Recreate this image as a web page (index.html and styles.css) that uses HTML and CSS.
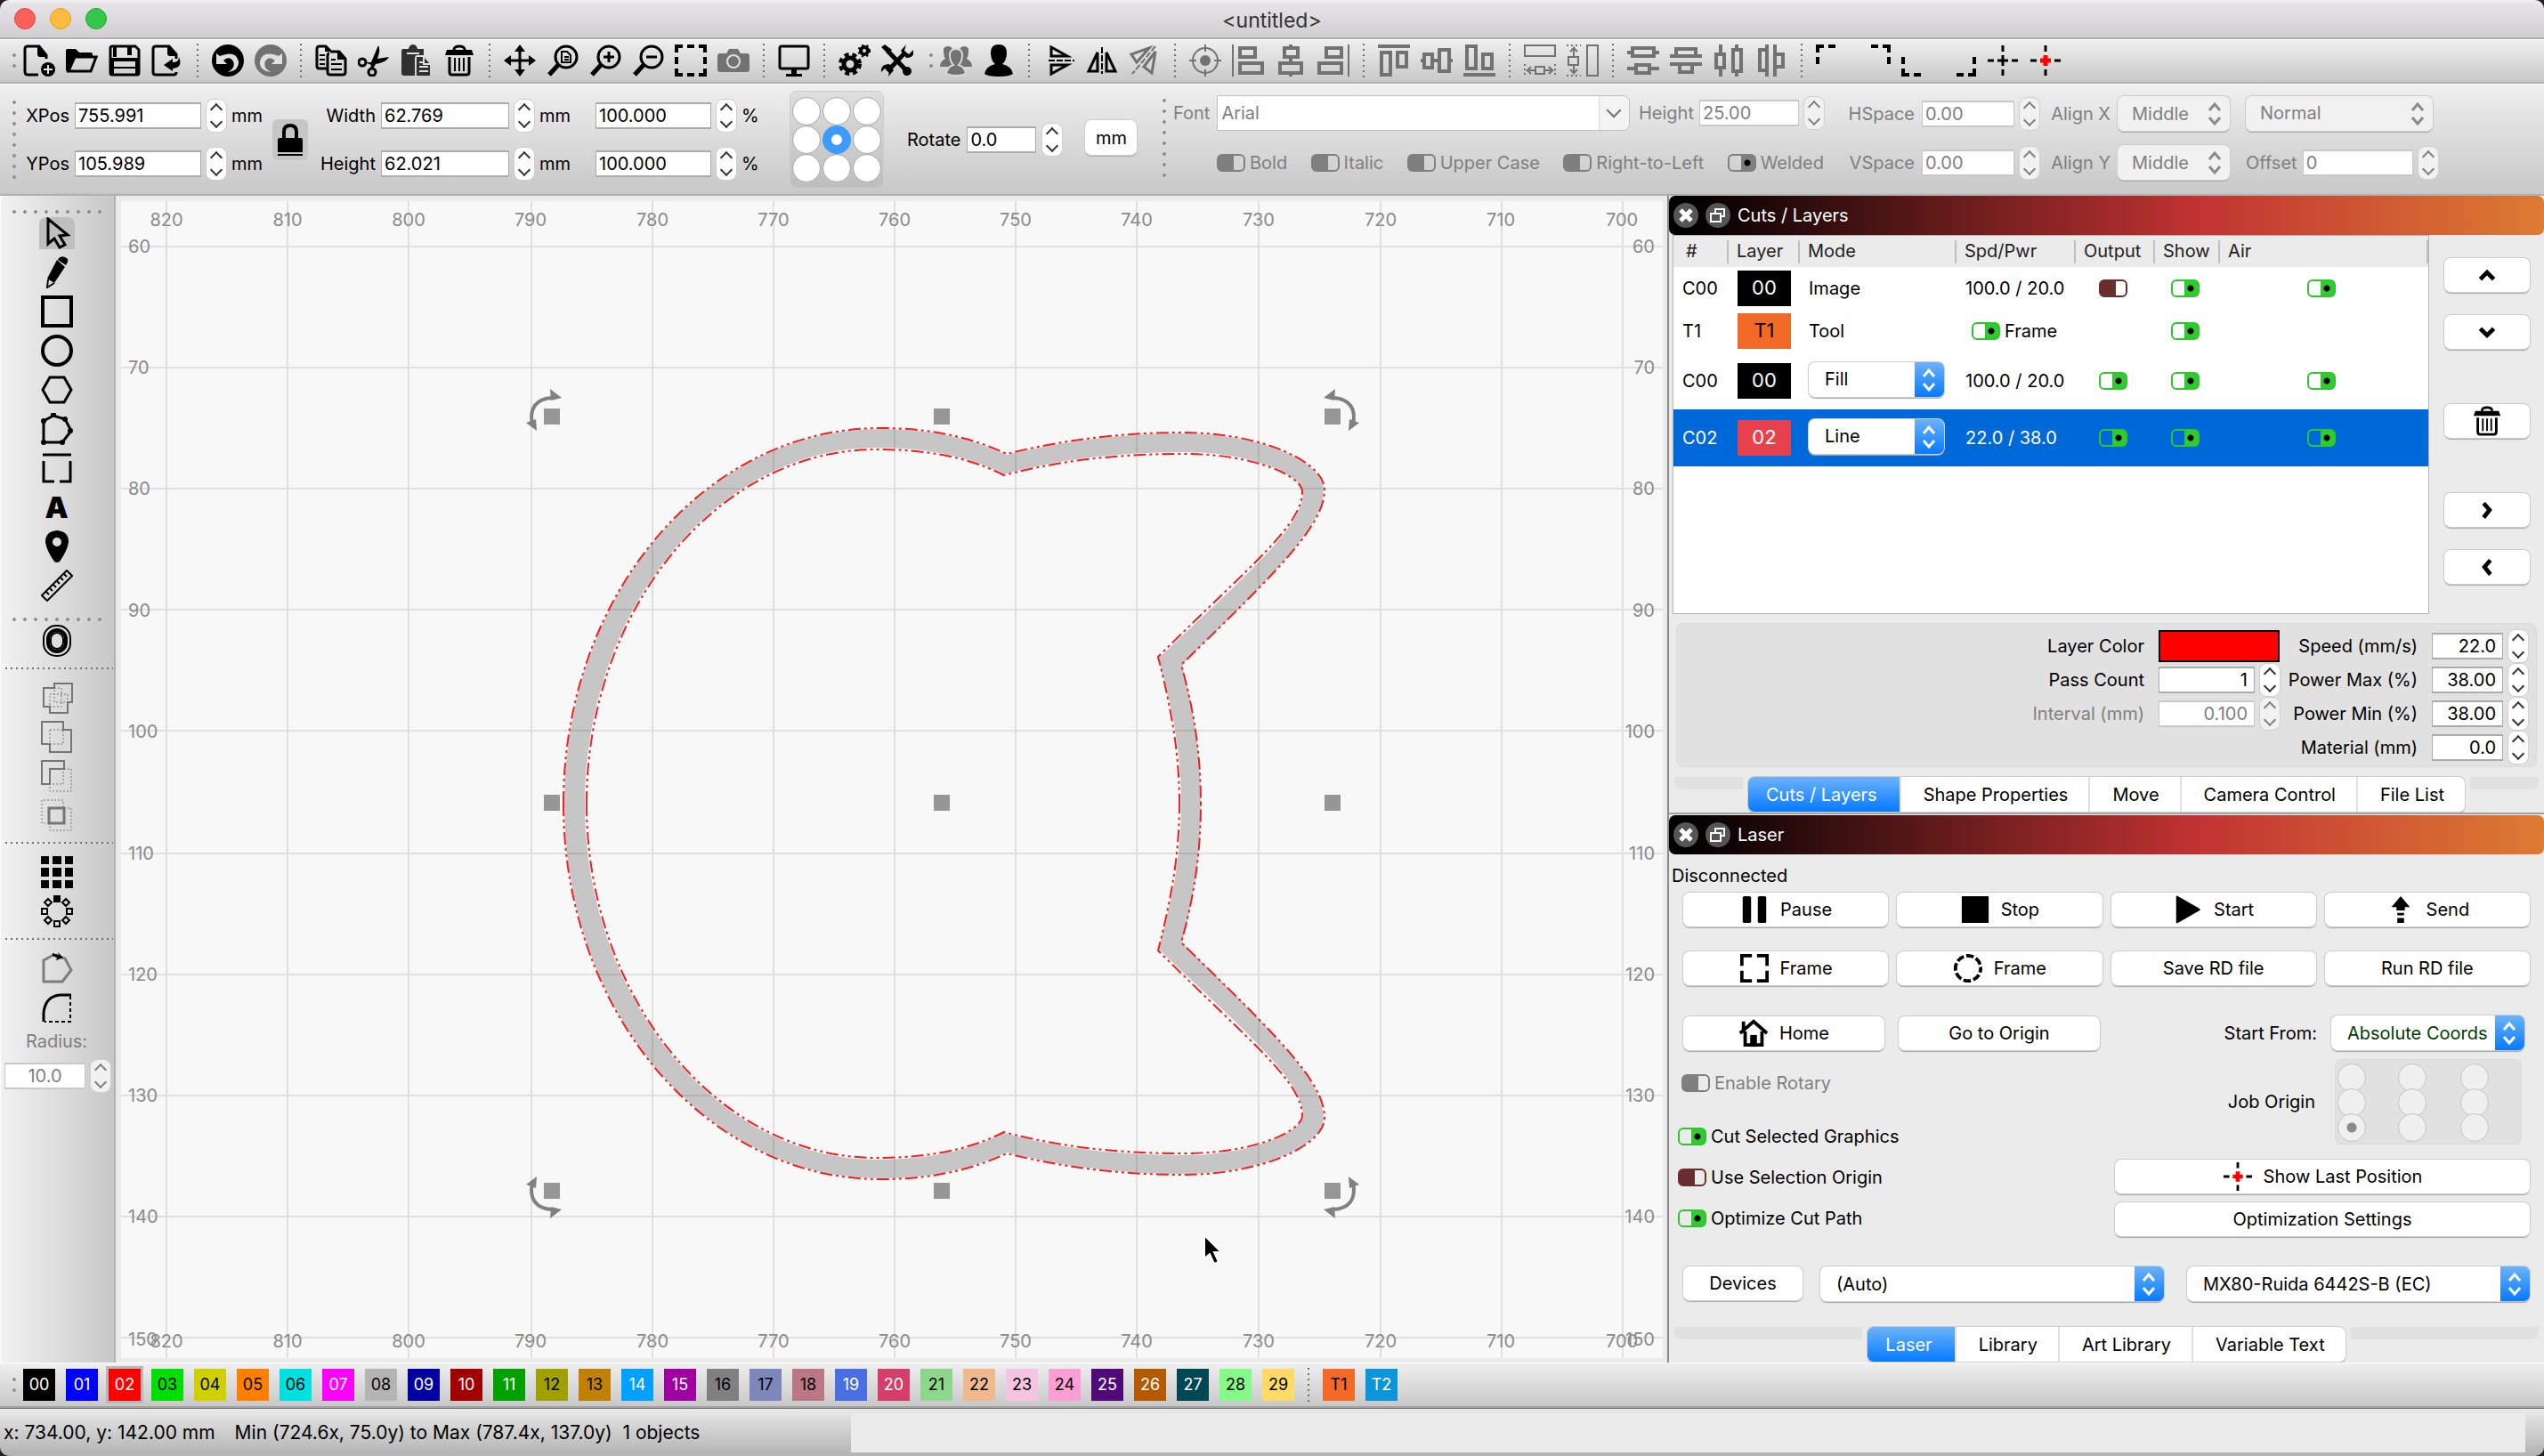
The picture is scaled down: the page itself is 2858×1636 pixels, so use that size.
FILE: index.html
```
<!DOCTYPE html>
<html lang="en">
<head>
    <meta charset="UTF-8">
    <meta name="viewport" content="width=device-width, initial-scale=1.0">
    <title>&lt;untitled&gt;</title>
    <link rel="stylesheet" href="styles.css">
</head>
<body>
    <!-- Icon sprite -->
    <svg class="sprite" aria-hidden="true">
        <symbol id="new" viewBox="0 0 36 36"><path d="M26 16V12L18 2H5Q2 2 2 5V30Q2 34 5 34H17"/><path class="f" d="M16 1L27 14H19Q16 14 16 11z"/><circle class="f" cx="28" cy="28" r="8"/><path class="w" d="M28 23v10M23 28h10"/></symbol>
        <symbol id="open" viewBox="0 0 36 36"><path class="f" d="M0 7Q0 5 2 5H11L15 9H28Q30 9 30 11V13H10L3 31Q0 31 0 28z"/><path d="M10 14H34L28 30H3z"/></symbol>
        <symbol id="save" viewBox="0 0 36 36"><path d="M2 4Q2 2 4 2H30L34 6V32Q34 34 32 34H4Q2 34 2 32z"/><path class="f" d="M1 15H35V19H1zM1 15H6V34H1zM30 15H35V34H30zM5 2H9V14H5zM21 3H26V12H21z"/><path d="M5 26H31" class="thin"/></symbol>
        <symbol id="export" viewBox="0 0 36 36"><path d="M28 16V11L20 2H5Q2 2 2 5V31Q2 34 5 34H25Q28 34 28 31"/><path class="f" d="M18 1L29 13H21Q18 13 18 10zM14 23L24 16V20Q31 20 31 14Q36 26 24 27V30z"/></symbol>
        <symbol id="undo" viewBox="0 0 36 36"><circle class="f" cx="18" cy="18" r="18"/><path class="wf" d="M5 10V22H17L13 18Q20 12 24 19Q27 26 18 31Q31 29 30 19Q27 6 9 13z"/></symbol>
        <symbol id="redo" viewBox="0 0 36 36"><circle class="f" cx="18" cy="18" r="18"/><path class="wf" d="M31 10V22H19L23 18Q16 12 12 19Q9 26 18 31Q5 29 6 19Q9 6 27 13z"/></symbol>
        <symbol id="copy" viewBox="0 0 36 36"><path d="M13 27H5Q2 27 2 24V5Q2 2 5 2H12L17 7M16 10Q14 10 14 13V31Q14 34 17 34H31Q34 34 34 31V16L27 8H17"/><path class="f" d="M25 7L35 17H25zM11 1L18 8H11z"/><path class="thin" d="M5 12H11M5 17H11M5 22H11M18 17H23M18 22H30M18 28H30"/></symbol>
        <symbol id="cut" viewBox="0 0 36 36"><circle cx="5" cy="20" r="4"/><circle cx="16" cy="31" r="4"/><path class="f" d="M8 20L15 20L23 1Q26 5 22 16L35 14Q32 20 20 22L17 27L14 27L15 23z"/></symbol>
        <symbol id="paste" viewBox="0 0 36 36"><path class="f" d="M2 5H9Q10 0 14 0Q18 0 19 5H26V12H19Q16 12 16 16V35H4Q1 35 1 32V7z"/><path class="w" d="M7 10H21"/><path class="f" d="M18 14H26L33 22V35H18z"/><path class="w" d="M26 14V22H33M21 20H25M21 25H31M21 30H31"/></symbol>
        <symbol id="trash" viewBox="0 0 36 36"><path d="M12 6Q12 2 18 2Q24 2 24 6M7 14V31Q7 34 10 34H26Q29 34 29 31V14"/><path class="f" d="M4 6H32L34 12H2z"/><path class="thin" d="M13 15V30M18 15V30M23 15V30"/></symbol>
        <symbol id="pan" viewBox="0 0 36 36"><path d="M18 5V31M5 18H31"/><path class="f" d="M18 0L24 8H12zM18 36L24 28H12zM0 18L8 12V24zM36 18L28 12V24z"/></symbol>
        <symbol id="zoompage" viewBox="0 0 36 36"><circle cx="22" cy="14" r="12"/><path class="thick" d="M13 23L3 34"/><path class="thin" d="M17 8H23L27 12V20H17zM20 14H25M20 17H25"/></symbol>
        <symbol id="zoomin" viewBox="0 0 36 36"><circle cx="22" cy="14" r="12"/><path class="thick" d="M13 23L3 34"/><path d="M22 8V20M16 14H28"/></symbol>
        <symbol id="zoomout" viewBox="0 0 36 36"><circle cx="22" cy="14" r="12"/><path class="thick" d="M13 23L3 34"/><path d="M16 14H28"/></symbol>
        <symbol id="marquee" viewBox="0 0 36 36"><path class="mid" d="M2 9V2H9M14 2H22M27 2H34V9M34 14V22M34 27V34H27M22 34H14M9 34H2V27M2 22V14"/></symbol>
        <symbol id="camera" viewBox="0 0 36 36"><path class="f" d="M10 10L13 5H23L26 10H33Q36 10 36 13V28Q36 31 33 31H3Q0 31 0 28V13Q0 10 3 10z"/><circle class="w" cx="18" cy="19" r="7"/></symbol>
        <symbol id="monitor" viewBox="0 0 36 36"><rect x="2" y="2" width="32" height="25" rx="2"/><path class="f" d="M15 28H21V33H27V36H9V33H15z"/></symbol>
        <symbol id="gears" viewBox="0 0 36 36"><circle class="thick" cx="13" cy="22" r="7"/><circle class="mid" cx="13" cy="22" r="11" stroke-dasharray="5 4"/><circle class="mid" cx="29" cy="7" r="4"/><circle cx="29" cy="7" r="6" stroke-dasharray="2 3"/></symbol>
        <symbol id="tools" viewBox="0 0 36 36"><path class="thick" d="M7 30L27 9M7 7L29 30"/><path class="f" d="M22 7L28 0L26 7L31 11L36 6Q38 15 28 15zM14 29L8 36L9 30L4 27L0 31Q-1 22 9 22zM0 3L4 0L12 6L8 11z"/><circle class="f" cx="29" cy="30" r="5"/></symbol>
        <symbol id="group" viewBox="0 0 36 36"><path class="f" d="M4 8Q3 2 9 2Q15 2 14 8Q14 13 11 16L15 25H0Q0 19 6 16Q4 13 4 8zM22 8Q22 2 27 2Q33 2 32 8Q32 13 30 16Q36 19 36 25H21L25 16Q22 13 22 8z"/><path class="f ring" d="M11 12Q11 5 18 5Q25 5 25 12Q25 19 21 23Q28 25 29 33Q24 35 18 35Q12 35 7 33Q8 25 15 23Q11 19 11 12z"/></symbol>
        <symbol id="person" viewBox="0 0 36 36"><path class="f" d="M9 9Q9 0 18 0Q27 0 27 9Q27 18 22 22Q32 24 34 33Q30 36 18 36Q6 36 2 33Q4 24 14 22Q9 18 9 9z"/></symbol>
        <symbol id="flipv" viewBox="0 0 36 36"><path d="M9 3V13H27zM9 33V23H27z"/><path class="thin" d="M6 18H35" stroke-dasharray="7 2"/></symbol>
        <symbol id="fliph" viewBox="0 0 36 36"><path d="M3 30H13V9zM33 30H23V9z"/><path class="thin" d="M18 3V33" stroke-dasharray="7 2"/></symbol>
        <symbol id="mirror" viewBox="0 0 36 36"><path d="M23 4L3 11L9 20zM30 8L26 32L17 25z"/><path class="thin" d="M30 2L4 33" stroke-dasharray="7 2"/></symbol>
        <symbol id="target" viewBox="0 0 36 36"><circle class="thin" cx="18" cy="18" r="14"/><circle class="f" cx="18" cy="18" r="6"/><path class="thin" d="M18 0V8M18 28V36M0 18H8M28 18H36"/></symbol>
        <symbol id="alignl" viewBox="0 0 36 36"><path class="thin" d="M1 0V36"/><rect class="mid" x="9" y="4" width="17" height="10"/><rect class="mid" x="9" y="21" width="25" height="11"/></symbol>
        <symbol id="alignc" viewBox="0 0 36 36"><path class="mid" d="M18 0V4M18 14V20M18 32V36"/><rect class="mid" x="11" y="4" width="15" height="10"/><rect class="mid" x="6" y="21" width="24" height="11"/></symbol>
        <symbol id="alignr" viewBox="0 0 36 36"><path class="thin" d="M35 0V36"/><rect class="mid" x="10" y="4" width="17" height="10"/><rect class="mid" x="2" y="21" width="25" height="11"/></symbol>
        <symbol id="alignt" viewBox="0 0 36 36"><path class="mid" d="M0 2H36"/><rect class="mid" x="4" y="9" width="10" height="25"/><rect class="mid" x="22" y="9" width="10" height="16"/></symbol>
        <symbol id="alignm" viewBox="0 0 36 36"><path class="mid" d="M0 18H4M14 18H20M32 18H36"/><rect class="mid" x="4" y="11" width="9" height="15"/><rect class="mid" x="21" y="6" width="11" height="24"/></symbol>
        <symbol id="alignb" viewBox="0 0 36 36"><path class="mid" d="M0 34H36"/><rect class="mid" x="4" y="2" width="10" height="25"/><rect class="mid" x="22" y="11" width="10" height="16"/></symbol>
        <symbol id="samew" viewBox="0 0 36 36"><rect class="thin" x="1" y="1" width="34" height="12"/><path class="thin" d="M1 22V36M35 22V36" stroke-dasharray="2 3"/><rect class="thin" x="13" y="25" width="10" height="8"/><path class="thin" d="M12 29H4L8 25M4 29L8 33M24 29H32L28 25M32 29L28 33"/></symbol>
        <symbol id="sameh" viewBox="0 0 36 36"><rect class="thin" x="23" y="1" width="12" height="34"/><path class="thin" d="M0 1H16M0 35H16" stroke-dasharray="2 3"/><rect class="thin" x="2" y="14" width="11" height="9"/><path class="thin" d="M8 13V4L4 8M8 4L12 8M8 24V32L4 28M8 32L12 28"/></symbol>
        <symbol id="distv" viewBox="0 0 36 36"><rect class="mid" x="6" y="4" width="24" height="9"/><rect class="mid" x="10" y="23" width="15" height="9"/><path class="mid" d="M0 9H5M31 9H36M0 27H9M26 27H36"/></symbol>
        <symbol id="distvc" viewBox="0 0 36 36"><path class="mid" d="M0 13H36M0 22H36M7 13V5H29V13M11 22V31H25V22"/></symbol>
        <symbol id="disth" viewBox="0 0 36 36"><rect class="mid" x="4" y="11" width="9" height="15"/><rect class="mid" x="23" y="6" width="9" height="24"/><path class="mid" d="M9 0V10M9 27V36M27 0V5M27 31V36"/></symbol>
        <symbol id="disthc" viewBox="0 0 36 36"><path class="mid" d="M13 0V36M22 0V36M13 6H5V29H13M22 11H31V25H22"/></symbol>
        <symbol id="ctl" viewBox="0 0 36 36"><path class="mid" d="M2 9V2H9M14 2H22M2 14V22"/></symbol>
        <symbol id="ctr" viewBox="0 0 36 36"><path class="mid" d="M34 9V2H27M22 2H14M34 14V22"/></symbol>
        <symbol id="cbl" viewBox="0 0 36 36"><path class="mid" d="M2 27V34H9M14 34H22M2 22V14"/></symbol>
        <symbol id="cbr" viewBox="0 0 36 36"><path class="mid" d="M34 27V34H27M22 34H14M34 22V14"/></symbol>
        <symbol id="cross" viewBox="0 0 36 36"><path d="M18 1V8M18 12V24M18 28V35M1 18H8M12 18H24M28 18H35"/></symbol>
        <symbol id="crossred" viewBox="0 0 36 36"><path d="M18 1V8M18 28V35M1 18H8M28 18H35"/><path class="r" d="M18 12V24M12 18H24"/></symbol>
        <symbol id="lock" viewBox="0 0 36 36"><path class="mid" d="M11 16V9Q11 2 18 2Q25 2 25 9V16"/><path class="f" d="M4 18Q4 16 6 16H30Q32 16 32 18V32H4zM4 34H32V36H4z"/></symbol>
        <symbol id="pointer" viewBox="0 0 36 36"><path d="M8 2V30L15 24L21 34L27 31L21 21L30 20z"/></symbol>
        <symbol id="pencil" viewBox="0 0 36 36"><path class="f" d="M18 4L27 12L15 30L7 25zM20 2Q25 -2 30 3Q31 6 28 10L19 4z"/><path class="thin" d="M8 26L7 35L15 30"/></symbol>
        <symbol id="rect" viewBox="0 0 36 36"><rect class="mid" x="2" y="2" width="32" height="32"/></symbol>
        <symbol id="ellipse" viewBox="0 0 36 36"><circle class="mid" cx="18" cy="18" r="16"/></symbol>
        <symbol id="hexagon" viewBox="0 0 36 36"><path d="M10 4H26L34 18L26 32H10L2 18z"/></symbol>
        <symbol id="polygon" viewBox="0 0 36 36"><path d="M3 9L14 3L27 7L34 20L24 33H3z"/><g class="f"><circle cx="3" cy="9" r="3"/><circle cx="14" cy="2" r="3"/><circle cx="27" cy="7" r="3"/><circle cx="33" cy="20" r="3"/><circle cx="24" cy="33" r="3"/><circle cx="3" cy="33" r="3"/></g></symbol>
        <symbol id="trim" viewBox="0 0 36 36"><path d="M2 3H34M3 10V33H15M21 33H33V10"/></symbol>
        <symbol id="pin" viewBox="0 0 36 36"><path class="f" fill-rule="evenodd" d="M18 0Q31 1 31 13Q30 22 21 35Q18 37 15 35Q6 22 5 13Q5 1 18 0zM18 8A5 5 0 1 0 18 18A5 5 0 1 0 18 8z"/></symbol>
        <symbol id="ruler" viewBox="0 0 36 36"><path class="thin" d="M1 29L29 1L35 7L7 35zM6 25L9 28M10 21L13 24M14 17L17 20M18 13L21 16M22 9L25 12M26 5L29 8"/></symbol>
        <symbol id="offset" viewBox="0 0 36 36"><rect class="thin" x="3" y="1" width="30" height="34" rx="14"/><rect class="mid" x="8" y="6" width="20" height="24" rx="10"/><rect class="thin" x="11" y="9" width="14" height="18" rx="7"/></symbol>
        <symbol id="weld" viewBox="0 0 36 36"><path class="thin" d="M3 7H15V2H35V23H30V35H10V28H3z"/><path class="dot" d="M15 7H23V28H10V14H30V23H15z"/></symbol>
        <symbol id="union" viewBox="0 0 36 36"><path class="thin" d="M1 1H25V10H34V35H10V26H1z"/><path class="dot" d="M10 10H25V26H10z"/></symbol>
        <symbol id="subtract" viewBox="0 0 36 36"><path class="thin" d="M1 1H26V10H10V27H1z"/><path class="dot" d="M26 10H34V35H10V27H25V11"/></symbol>
        <symbol id="intersect" viewBox="0 0 36 36"><rect x="9" y="10" width="17" height="17"/><path class="dot" d="M9 27H1V1H25V10H34V35H10V27"/></symbol>
        <symbol id="gridarray" viewBox="0 0 36 36"><path class="f" d="M0 0h9v9H0zM13 0h10v9H13zM27 0h9v9h-9zM0 13h9v10H0zM13 13h10v10H13zM27 13h9v10h-9zM0 27h9v9H0zM13 27h10v9H13zM27 27h9v9h-9z"/></symbol>
        <symbol id="circarray" viewBox="0 0 36 36"><path class="f" d="M14 0h8v8h-8z"/><path class="thin" d="M1 15h6v6H1zM29 15h6v6h-6zM15 29h6v6h-6zM8 4l4 4-4 4-4-4zM28 4l4 4-4 4-4-4zM8 24l4 4-4 4-4-4zM28 24l4 4-4 4-4-4z"/></symbol>
        <symbol id="startpt" viewBox="0 0 36 36"><g class="g"><path d="M3 9L14 3L27 7L34 20L24 33H3z"/></g><path class="f" d="M13 1L20 3L19 0L25 6L17 9L18 6L13 4z"/></symbol>
        <symbol id="fillet" viewBox="0 0 36 36"><path d="M3 34V24Q5 5 22 4H34"/><path class="thin" d="M33 5V34H4" stroke-dasharray="4 3"/></symbol>
        <symbol id="pause" viewBox="0 0 36 36"><rect class="f" x="4" y="2" width="10" height="32" rx="2"/><rect class="f" x="22" y="2" width="10" height="32" rx="2"/></symbol>
        <symbol id="stop" viewBox="0 0 36 36"><rect class="f" x="2" y="2" width="32" height="32" rx="1"/></symbol>
        <symbol id="play" viewBox="0 0 36 36"><path class="f" d="M4 3Q4 1 6 2L32 17Q33 18 32 19L6 34Q4 35 4 33z"/></symbol>
        <symbol id="send" viewBox="0 0 36 36"><path class="f" d="M18 2L29 15H23V19H13V15H7zM14 22H22V25H14zM14 28H22V34H14z"/></symbol>
        <symbol id="frame" viewBox="0 0 36 36"><path class="mid" d="M3 15V3H15M21 3H33V15M33 21V33H21M15 33H3V21"/></symbol>
        <symbol id="framec" viewBox="0 0 36 36"><circle class="mid" cx="18" cy="18" r="15" stroke-dasharray="9 3" stroke-dashoffset="4"/></symbol>
        <symbol id="home" viewBox="0 0 36 36"><path class="mid" d="M2 18L18 4L34 18M6 14V4M8 16V32H28V16"/><path class="f" d="M14 20H22V34H14z"/></symbol>
        <symbol id="up" viewBox="0 0 36 36"><path class="thick" d="M10 23L18 15L26 23"/></symbol>
        <symbol id="down" viewBox="0 0 36 36"><path class="thick" d="M10 14L18 22L26 14"/></symbol>
        <symbol id="right" viewBox="0 0 36 36"><path class="thick" d="M14 10L21 18L14 27"/></symbol>
        <symbol id="left" viewBox="0 0 36 36"><path class="thick" d="M22 10L15 18L22 27"/></symbol>
        <symbol id="updown" viewBox="0 0 20 28"><path d="M4 10L10 3L16 10M4 18L10 25L16 18"/></symbol>
        <symbol id="close" viewBox="0 0 28 28"><path class="thick" d="M8 8L20 20M20 8L8 20"/></symbol>
        <symbol id="float" viewBox="0 0 28 28"><path class="thin" d="M6 12H17V21H6zM11 11V7H21V15H18"/></symbol>
    </svg>

    <header class="titlebar">
        <span class="light close"></span>
        <span class="light min"></span>
        <span class="light max"></span>
        <h1>&lt;untitled&gt;</h1>
    </header>

    <div class="toolbar icons">
        <div class="toolgroup">
            <span class="handle"></span>
            <button title="New"><svg><use href="#new"/></svg></button>
            <button title="Open"><svg><use href="#open"/></svg></button>
            <button title="Save"><svg><use href="#save"/></svg></button>
            <button title="Export"><svg><use href="#export"/></svg></button>
            <span class="sep"></span>
            <button title="Undo"><svg><use href="#undo"/></svg></button>
            <button title="Redo" disabled><svg><use href="#redo"/></svg></button>
            <span class="sep"></span>
            <button title="Copy"><svg><use href="#copy"/></svg></button>
            <button title="Cut"><svg><use href="#cut"/></svg></button>
            <button title="Paste"><svg class="soft"><use href="#paste"/></svg></button>
            <button title="Delete"><svg><use href="#trash"/></svg></button>
            <span class="sep"></span>
            <button title="Pan"><svg><use href="#pan"/></svg></button>
            <button title="Zoom to page"><svg><use href="#zoompage"/></svg></button>
            <button title="Zoom in"><svg><use href="#zoomin"/></svg></button>
            <button title="Zoom out"><svg><use href="#zoomout"/></svg></button>
            <button title="Frame selection"><svg><use href="#marquee"/></svg></button>
            <button title="Camera" disabled><svg><use href="#camera"/></svg></button>
            <span class="sep"></span>
            <button title="Preview"><svg><use href="#monitor"/></svg></button>
            <span class="sep"></span>
            <button title="Settings"><svg><use href="#gears"/></svg></button>
            <button title="Device settings"><svg><use href="#tools"/></svg></button>
        </div>
        <div class="toolgroup">
            <span class="handle"></span>
            <button title="Group" disabled><svg><use href="#group"/></svg></button>
            <button title="Ungroup"><svg><use href="#person"/></svg></button>
            <span class="sep"></span>
            <button title="Flip vertical"><svg><use href="#flipv"/></svg></button>
            <button title="Flip horizontal"><svg><use href="#fliph"/></svg></button>
            <button title="Mirror across line" disabled><svg><use href="#mirror"/></svg></button>
            <span class="sep"></span>
            <button title="Align centers" disabled><svg><use href="#target"/></svg></button>
            <button title="Align left" disabled><svg><use href="#alignl"/></svg></button>
            <button title="Align center" disabled><svg><use href="#alignc"/></svg></button>
            <button title="Align right" disabled><svg><use href="#alignr"/></svg></button>
            <span class="sep"></span>
            <button title="Align top" disabled><svg><use href="#alignt"/></svg></button>
            <button title="Align middle" disabled><svg><use href="#alignm"/></svg></button>
            <button title="Align bottom" disabled><svg><use href="#alignb"/></svg></button>
            <span class="sep"></span>
            <button title="Same width" disabled><svg><use href="#samew"/></svg></button>
            <button title="Same height" disabled><svg><use href="#sameh"/></svg></button>
            <span class="sep"></span>
            <button title="Distribute V-spaced" disabled><svg><use href="#distv"/></svg></button>
            <button title="Distribute V-centered" disabled><svg><use href="#distvc"/></svg></button>
            <button title="Distribute H-spaced" disabled><svg><use href="#disth"/></svg></button>
            <button title="Distribute H-centered" disabled><svg><use href="#disthc"/></svg></button>
            <span class="sep"></span>
            <button title="Move to upper left"><svg><use href="#ctl"/></svg></button>
            <button title="Move to upper right"><svg><use href="#ctr"/></svg></button>
            <button title="Move to lower left"><svg><use href="#cbl"/></svg></button>
            <button title="Move to lower right"><svg><use href="#cbr"/></svg></button>
            <button title="Move to center"><svg><use href="#cross"/></svg></button>
            <button title="Move to laser position"><svg><use href="#crossred"/></svg></button>
        </div>
    </div>

    <div class="toolbar props">
        <div class="numeric">
            <span class="handle"></span>
            <div class="position">
                <label for="xpos">XPos</label>
                <input id="xpos" type="text" value="755.991">
                <span class="stepper"><button title="Up"></button><button title="Down"></button></span>
                <span>mm</span>
                <button class="lock" title="Lock aspect ratio"><svg><use href="#lock"/></svg></button>
                <label for="width">Width</label>
                <input id="width" type="text" value="62.769">
                <span class="stepper"><button title="Up"></button><button title="Down"></button></span>
                <span>mm</span>
                <input type="text" value="100.000" aria-label="Width percent">
                <span class="stepper"><button title="Up"></button><button title="Down"></button></span>
                <span>%</span>

                <label for="ypos">YPos</label>
                <input id="ypos" type="text" value="105.989">
                <span class="stepper"><button title="Up"></button><button title="Down"></button></span>
                <span>mm</span>
                <label for="height">Height</label>
                <input id="height" type="text" value="62.021">
                <span class="stepper"><button title="Up"></button><button title="Down"></button></span>
                <span>mm</span>
                <input type="text" value="100.000" aria-label="Height percent">
                <span class="stepper"><button title="Up"></button><button title="Down"></button></span>
                <span>%</span>
            </div>
            <div class="anchor">
                <input type="radio" name="anchor" aria-label="Top left"><input type="radio" name="anchor" aria-label="Top"><input type="radio" name="anchor" aria-label="Top right">
                <input type="radio" name="anchor" aria-label="Left"><input type="radio" name="anchor" aria-label="Center" checked><input type="radio" name="anchor" aria-label="Right">
                <input type="radio" name="anchor" aria-label="Bottom left"><input type="radio" name="anchor" aria-label="Bottom"><input type="radio" name="anchor" aria-label="Bottom right">
            </div>
            <div class="rotate">
                <label for="rotate">Rotate</label>
                <input id="rotate" type="text" value="0.0">
                <span class="stepper"><button title="Up"></button><button title="Down"></button></span>
            </div>
            <button class="btn units">mm</button>
        </div>

        <div class="textprops">
            <span class="handle"></span>
            <div class="fontbox">
                <div class="line">
                    <label for="font">Font</label>
                    <span class="combo"><input id="font" type="text" value="Arial" disabled><button title="Choose font" disabled></button></span>
                    <label for="fheight">Height</label>
                    <input id="fheight" class="w112" type="text" value="25.00" disabled>
                    <span class="stepper off"><button title="Up"></button><button title="Down"></button></span>
                </div>
                <div class="line styles">
                    <label><input type="checkbox" class="toggle" disabled>Bold</label>
                    <label><input type="checkbox" class="toggle" disabled>Italic</label>
                    <label><input type="checkbox" class="toggle" disabled>Upper Case</label>
                    <label><input type="checkbox" class="toggle" disabled>Right-to-Left</label>
                    <label><input type="checkbox" class="toggle" disabled checked>Welded</label>
                </div>
            </div>
            <div class="spacing">
                <label for="hspace">HSpace</label>
                <input id="hspace" type="text" value="0.00" disabled>
                <span class="stepper off"><button title="Up"></button><button title="Down"></button></span>
                <label for="alignx">Align X</label>
                <span class="select off"><select id="alignx" disabled><option>Middle</option></select><svg><use href="#updown"/></svg></span>
                <label for="vspace">VSpace</label>
                <input id="vspace" type="text" value="0.00" disabled>
                <span class="stepper off"><button title="Up"></button><button title="Down"></button></span>
                <label for="aligny">Align Y</label>
                <span class="select off"><select id="aligny" disabled><option>Middle</option></select><svg><use href="#updown"/></svg></span>
            </div>
            <div class="warp">
                <span class="select off"><select aria-label="Text mode" disabled><option>Normal</option></select><svg><use href="#updown"/></svg></span>
                <div class="offset">
                    <label for="offset-value">Offset</label>
                    <input id="offset-value" type="text" value="0" disabled>
                    <span class="stepper off"><button title="Up"></button><button title="Down"></button></span>
                </div>
            </div>
        </div>
    </div>

    <main>
        <nav class="palette">
            <span class="handle wide"></span>
            <button class="active" title="Select"><svg><use href="#pointer"/></svg></button>
            <button title="Draw lines"><svg><use href="#pencil"/></svg></button>
            <button title="Rectangle"><svg><use href="#rect"/></svg></button>
            <button title="Ellipse"><svg><use href="#ellipse"/></svg></button>
            <button title="Polygon"><svg><use href="#hexagon"/></svg></button>
            <button title="Edit nodes"><svg><use href="#polygon"/></svg></button>
            <button title="Add tabs"><svg><use href="#trim"/></svg></button>
            <button title="Text" class="letter">A</button>
            <button title="Position laser"><svg><use href="#pin"/></svg></button>
            <button title="Measure"><svg><use href="#ruler"/></svg></button>
            <span class="handle wide second"></span>
            <button title="Offset shapes"><svg><use href="#offset"/></svg></button>
            <span class="rule"></span>
            <button title="Weld" disabled><svg><use href="#weld"/></svg></button>
            <button title="Boolean union" disabled><svg><use href="#union"/></svg></button>
            <button title="Boolean subtract" disabled><svg><use href="#subtract"/></svg></button>
            <button title="Boolean intersect" disabled><svg><use href="#intersect"/></svg></button>
            <span class="rule"></span>
            <button title="Grid array"><svg><use href="#gridarray"/></svg></button>
            <button title="Circular array"><svg><use href="#circarray"/></svg></button>
            <span class="rule"></span>
            <button title="Start point"><svg><use href="#startpt"/></svg></button>
            <button title="Radius"><svg><use href="#fillet"/></svg></button>
            <label for="radius">Radius:</label>
            <div class="radius">
                <input id="radius" type="text" value="10.0" disabled>
                <span class="stepper off"><button title="Up"></button><button title="Down"></button></span>
            </div>
        </nav>

        <section class="canvas">
            <svg viewBox="136 226 1732 1300" preserveAspectRatio="xMidYMid slice">
                <defs>
                    <path id="outer" d="M633 903C633 670 792 481 989 481C1036 481 1084 488 1131 510C1195 494 1262 486 1327 486C1420 486 1488 520 1488 550C1488 590 1437 640 1327 747C1342 800 1349 850 1349 903"/>
                    <path id="inner" d="M659 903C659 686 806 505 984 505C1036 505 1085 512 1128 534C1195 516 1262 510 1330 510C1410 510 1462 535 1463 552C1463 590 1410 630 1301 738C1317 800 1325 850 1325 903"/>
                    <path id="band" d="M634 903C634 670 792 482 989 482C1036 482 1084 489 1131 511C1195 495 1262 487 1327 487C1420 487 1487 520 1487 550C1487 590 1437 640 1328 747C1342 800 1349 850 1349 903H1327C1327 850 1319 800 1301 740C1412 636 1464 590 1464 552C1462 535 1410 508 1330 508C1262 508 1195 514 1128 533C1085 511 1036 503 984 503C806 503 657 686 657 903z"/>
                    <g id="turn"><path class="arc" d="M598 477C594 458 603 448 620 447"/><path d="M618 437L631 447L619 450zM591 475L602 471L603 484z"/></g>
                </defs>
                <path class="grid" d="M187 226V1526M323 226V1526M459 226V1526M597 226V1526M733 226V1526M869 226V1526M1005 226V1526M1141 226V1526M1277 226V1526M1414 226V1526M1551 226V1526M1687 226V1526M1823 226V1526M136 277H1868M136 413H1868M136 549H1868M136 685H1868M136 821H1868M136 959H1868M136 1095H1868M136 1231H1868M136 1367H1868M136 1503H1868"/>
                <g class="axis mid">
                    <text x="187" y="254">820</text><text x="323" y="254">810</text><text x="459" y="254">800</text><text x="596" y="254">790</text><text x="733" y="254">780</text><text x="869" y="254">770</text><text x="1005" y="254">760</text><text x="1141" y="254">750</text><text x="1277" y="254">740</text><text x="1414" y="254">730</text><text x="1551" y="254">720</text><text x="1686" y="254">710</text><text x="1822" y="254">700</text>
                    <text x="187" y="1514">820</text><text x="323" y="1514">810</text><text x="459" y="1514">800</text><text x="596" y="1514">790</text><text x="733" y="1514">780</text><text x="869" y="1514">770</text><text x="1005" y="1514">760</text><text x="1141" y="1514">750</text><text x="1277" y="1514">740</text><text x="1414" y="1514">730</text><text x="1551" y="1514">720</text><text x="1686" y="1514">710</text><text x="1822" y="1514">700</text>
                </g>
                <g class="axis">
                    <text x="144" y="284">60</text><text x="144" y="420">70</text><text x="144" y="556">80</text><text x="144" y="693">90</text><text x="144" y="829">100</text><text x="144" y="966">110</text><text x="144" y="1102">120</text><text x="144" y="1238">130</text><text x="144" y="1374">140</text><text x="144" y="1512">150</text>
                </g>
                <g class="axis end">
                    <text x="1859" y="284">60</text><text x="1859" y="420">70</text><text x="1859" y="556">80</text><text x="1859" y="693">90</text><text x="1859" y="829">100</text><text x="1859" y="966">110</text><text x="1859" y="1102">120</text><text x="1859" y="1238">130</text><text x="1859" y="1374">140</text><text x="1859" y="1512">150</text>
                </g>
                <use href="#band" class="band"/>
                <use href="#outer" class="cutline"/>
                <use href="#inner" class="cutline"/>
                <g transform="matrix(1 0 0 -1 0 1806)">
                    <use href="#band" class="band"/>
                    <use href="#outer" class="cutline"/>
                    <use href="#inner" class="cutline"/>
                </g>
                <path class="grip" d="M611 459h18v18h-18zM1049 459h18v18h-18zM1488 459h18v18h-18zM611 893h18v18h-18zM1049 893h18v18h-18zM1488 893h18v18h-18zM611 1329h18v18h-18zM1049 1329h18v18h-18zM1488 1329h18v18h-18z"/>
                <g class="turns">
                    <use href="#turn"/>
                    <use href="#turn" transform="matrix(-1 0 0 1 2118 0)"/>
                    <use href="#turn" transform="matrix(1 0 0 -1 0 1806)"/>
                    <use href="#turn" transform="matrix(-1 0 0 -1 2118 1806)"/>
                </g>
                <path class="cursor" d="M1353 1388V1414L1359 1409L1364 1420L1369 1418L1364 1407H1372z"/>
            </svg>
        </section>

        <aside class="dock">
            <section class="panel cuts">
                <h2><button title="Close"><svg><use href="#close"/></svg></button><button title="Float"><svg><use href="#float"/></svg></button>Cuts / Layers</h2>
                <div class="layers">
                    <div class="list">
                        <table>
                            <colgroup><col class="c-id"><col class="c-layer"><col class="c-mode"><col class="c-spd"><col class="c-out"><col class="c-show"><col></colgroup>
                            <thead>
                                <tr><th>#</th><th>Layer</th><th>Mode</th><th>Spd/Pwr</th><th>Output</th><th>Show</th><th>Air</th></tr>
                            </thead>
                            <tbody>
                                <tr>
                                    <td>C00</td><td><span class="chip black">00</span></td><td>Image</td><td>100.0 / 20.0</td>
                                    <td class="c"><input type="checkbox" class="toggle" aria-label="Output"></td>
                                    <td class="c"><input type="checkbox" class="toggle" aria-label="Show" checked></td>
                                    <td class="c"><input type="checkbox" class="toggle" aria-label="Air" checked></td>
                                </tr>
                                <tr>
                                    <td>T1</td><td><span class="chip orange">T1</span></td><td>Tool</td>
                                    <td><label class="check inset"><input type="checkbox" class="toggle" checked>Frame</label></td>
                                    <td></td>
                                    <td class="c"><input type="checkbox" class="toggle" aria-label="Show" checked></td>
                                    <td></td>
                                </tr>
                                <tr class="tall">
                                    <td>C00</td><td><span class="chip black">00</span></td>
                                    <td><span class="select"><select aria-label="Mode"><option>Fill</option></select><svg><use href="#updown"/></svg></span></td>
                                    <td>100.0 / 20.0</td>
                                    <td class="c"><input type="checkbox" class="toggle" aria-label="Output" checked></td>
                                    <td class="c"><input type="checkbox" class="toggle" aria-label="Show" checked></td>
                                    <td class="c"><input type="checkbox" class="toggle" aria-label="Air" checked></td>
                                </tr>
                                <tr class="tall selected">
                                    <td>C02</td><td><span class="chip red">02</span></td>
                                    <td><span class="select"><select aria-label="Mode"><option>Line</option></select><svg><use href="#updown"/></svg></span></td>
                                    <td>22.0 / 38.0</td>
                                    <td class="c"><input type="checkbox" class="toggle" aria-label="Output" checked></td>
                                    <td class="c"><input type="checkbox" class="toggle" aria-label="Show" checked></td>
                                    <td class="c"><input type="checkbox" class="toggle" aria-label="Air" checked></td>
                                </tr>
                            </tbody>
                        </table>
                    </div>
                    <div class="order">
                        <button class="btn" title="Move up"><svg><use href="#up"/></svg></button>
                        <button class="btn" title="Move down"><svg><use href="#down"/></svg></button>
                        <button class="btn apart" title="Delete"><svg><use href="#trash"/></svg></button>
                        <button class="btn apart" title="Next"><svg><use href="#right"/></svg></button>
                        <button class="btn" title="Previous"><svg><use href="#left"/></svg></button>
                    </div>
                </div>
                <div class="settings">
                    <label for="lcolor">Layer Color</label>
                    <button id="lcolor" class="color" title="Layer Color"></button>
                    <label for="speed">Speed (mm/s)</label>
                    <input id="speed" type="text" value="22.0">
                    <span class="stepper"><button title="Up"></button><button title="Down"></button></span>

                    <label for="passes">Pass Count</label>
                    <input id="passes" type="text" value="1">
                    <span class="stepper"><button title="Up"></button><button title="Down"></button></span>
                    <label for="pmax">Power Max (%)</label>
                    <input id="pmax" type="text" value="38.00">
                    <span class="stepper"><button title="Up"></button><button title="Down"></button></span>

                    <label for="interval" class="dim">Interval (mm)</label>
                    <input id="interval" type="text" value="0.100" disabled>
                    <span class="stepper off"><button title="Up"></button><button title="Down"></button></span>
                    <label for="pmin">Power Min (%)</label>
                    <input id="pmin" type="text" value="38.00">
                    <span class="stepper"><button title="Up"></button><button title="Down"></button></span>

                    <label for="material" class="last">Material (mm)</label>
                    <input id="material" type="text" value="0.0">
                    <span class="stepper"><button title="Up"></button><button title="Down"></button></span>
                </div>
                <div class="tabrow">
                    <span class="strip"></span>
                    <div class="tabs"><button class="on">Cuts / Layers</button><button>Shape Properties</button><button>Move</button><button>Camera Control</button><button>File List</button></div>
                    <span class="strip"></span>
                </div>
            </section>

            <section class="panel laser">
                <h2><button title="Close"><svg><use href="#close"/></svg></button><button title="Float"><svg><use href="#float"/></svg></button>Laser</h2>
                <p class="state">Disconnected</p>
                <div class="body">
                    <div class="actions">
                        <button class="btn"><svg><use href="#pause"/></svg>Pause</button>
                        <button class="btn"><svg><use href="#stop"/></svg>Stop</button>
                        <button class="btn"><svg><use href="#play"/></svg>Start</button>
                        <button class="btn"><svg><use href="#send"/></svg>Send</button>
                        <button class="btn"><svg><use href="#frame"/></svg>Frame</button>
                        <button class="btn"><svg><use href="#framec"/></svg>Frame</button>
                        <button class="btn">Save RD file</button>
                        <button class="btn">Run RD file</button>
                    </div>
                    <div class="homing">
                        <button class="btn"><svg><use href="#home"/></svg>Home</button>
                        <button class="btn">Go to Origin</button>
                        <label for="startfrom">Start From:</label>
                        <span class="select"><select id="startfrom"><option>Absolute Coords</option></select><svg><use href="#updown"/></svg></span>
                    </div>
                    <div class="options">
                        <div class="checks">
                            <label class="check rotary"><input type="checkbox" class="toggle" disabled>Enable Rotary</label>
                            <label class="check"><input type="checkbox" class="toggle" checked>Cut Selected Graphics</label>
                            <label class="check"><input type="checkbox" class="toggle">Use Selection Origin</label>
                            <label class="check"><input type="checkbox" class="toggle" checked>Optimize Cut Path</label>
                        </div>
                        <div class="origin">
                            <div class="job">
                                <span>Job Origin</span>
                                <div class="jobgrid">
                                    <input type="radio" name="job" aria-label="Top left" disabled><input type="radio" name="job" aria-label="Top" disabled><input type="radio" name="job" aria-label="Top right" disabled>
                                    <input type="radio" name="job" aria-label="Left" disabled><input type="radio" name="job" aria-label="Center" disabled><input type="radio" name="job" aria-label="Right" disabled>
                                    <input type="radio" name="job" aria-label="Bottom left" disabled checked><input type="radio" name="job" aria-label="Bottom" disabled><input type="radio" name="job" aria-label="Bottom right" disabled>
                                </div>
                            </div>
                            <button class="btn"><svg><use href="#crossred"/></svg>Show Last Position</button>
                            <button class="btn">Optimization Settings</button>
                        </div>
                    </div>
                    <div class="devices">
                        <button class="btn">Devices</button>
                        <span class="select port"><select aria-label="Port"><option>(Auto)</option></select><svg><use href="#updown"/></svg></span>
                        <span class="select"><select aria-label="Device"><option>MX80-Ruida 6442S-B (EC)</option></select><svg><use href="#updown"/></svg></span>
                    </div>
                </div>
                <div class="tabrow">
                    <span class="strip"></span>
                    <div class="tabs"><button class="on">Laser</button><button>Library</button><button>Art Library</button><button>Variable Text</button></div>
                    <span class="strip"></span>
                </div>
            </section>
        </aside>
    </main>

    <div class="swatches">
        <span class="handle"></span>
        <button class="lt" style="background:#000000">00</button>
        <button class="lt" style="background:#0000ff">01</button>
        <button class="lt picked" style="background:#ff0000">02</button>
        <button style="background:#00e000">03</button>
        <button style="background:#d0d000">04</button>
        <button style="background:#ff8000">05</button>
        <button style="background:#00e0e0">06</button>
        <button class="lt" style="background:#ff00ff">07</button>
        <button style="background:#b4b4b4">08</button>
        <button class="lt" style="background:#0000a0">09</button>
        <button class="lt" style="background:#a00000">10</button>
        <button class="lt" style="background:#00a000">11</button>
        <button style="background:#a0a000">12</button>
        <button style="background:#c08000">13</button>
        <button class="lt" style="background:#00a0ff">14</button>
        <button class="lt" style="background:#a000a0">15</button>
        <button style="background:#808080">16</button>
        <button style="background:#7d87b9">17</button>
        <button style="background:#bb7784">18</button>
        <button class="lt" style="background:#4a6fe3">19</button>
        <button class="lt" style="background:#d33f6a">20</button>
        <button style="background:#8cd78c">21</button>
        <button style="background:#f0b98d">22</button>
        <button style="background:#f6c4e1">23</button>
        <button style="background:#fa9ed4">24</button>
        <button class="lt" style="background:#500a78">25</button>
        <button class="lt" style="background:#b45a00">26</button>
        <button class="lt" style="background:#004754">27</button>
        <button style="background:#86fa88">28</button>
        <button style="background:#ffdb66">29</button>
        <span class="sep"></span>
        <button style="background:#f36926">T1</button>
        <button class="lt" style="background:#0c96d9">T2</button>
    </div>

    <footer>
        <span>x: 734.00, y: 142.00 mm</span>
        <span>Min (724.6x, 75.0y) to Max (787.4x, 137.0y)&nbsp; 1 objects</span>
        <div class="progress"></div>
    </footer>
</body>
</html>
```
FILE: styles.css
```
* {
    box-sizing: border-box;
}
body {
    margin: 0;
    height: 100vh;
    display: flex;
    flex-direction: column;
    background: #222;
    color: #000;
    font-family: Inter, "Liberation Sans", sans-serif;
    font-size: 20px;
    line-height: 26px;
}
button, input, select {
    font: inherit;
    color: inherit;
    margin: 0;
    padding: 0;
    border: 0;
    background: none;
}
h1, h2, p {
    margin: 0;
    font-size: 20px;
    font-weight: 400;
}
.sprite {
    position: absolute;
    width: 0;
    height: 0;
}

/* icons */
svg {
    display: block;
    width: 36px;
    height: 36px;
    fill: none;
    stroke: currentColor;
    stroke-width: 3px;
    overflow: visible;
}
.f { fill: currentColor; stroke: none; }
.w { stroke: #e0e0e0; stroke-width: 2px; }
.wf { fill: #e0e0e0; stroke: none; }
.r { stroke: #f00; stroke-width: 5px; }
.g { stroke: #7d7d7d; }
.thin { stroke-width: 2px; }
.mid { stroke-width: 4px; }
.thick { stroke-width: 5px; }
.dot { stroke-width: 1px; stroke-dasharray: 2 2; }
.ring { stroke: #d8d8d8; stroke-width: 2px; }
.soft { color: #303030; }
button:disabled { color: #727272; }

/* title bar */
.titlebar {
    display: flex;
    align-items: center;
    gap: 16px;
    height: 44px;
    padding: 0 16px;
    border-bottom: 2px solid #b0aeb0;
    border-radius: 10px 10px 0 0;
    background: linear-gradient(#f4f2f4, #e6e4e7 4px, #d0ced1);
    position: relative;
    flex: none;
}
.titlebar h1 {
    position: absolute;
    left: 0;
    right: 0;
    padding-top: 3px;
    text-align: center;
    font-size: 23px;
    color: #333;
}
.light {
    width: 24px;
    height: 24px;
    border-radius: 50%;
}
.light.close { background: #fc605b; border: 1px solid #e0443e; }
.light.min { background: #fdbc40; border: 1px solid #dfa023; }
.light.max { background: #34c84a; border: 1px solid #1fa632; }

/* toolbars */
.toolbar {
    display: flex;
    flex: none;
    border-bottom: 2px solid #b0b0b0;
    border-top: 1px solid #fff;
    background: linear-gradient(#efefef, #c8c8c8);
}
.toolbar.icons {
    height: 50px;
}
.toolgroup {
    display: flex;
    align-items: center;
    gap: 12px;
    padding: 0 4px 2px 14px;
}
.handle {
    width: 4px;
    height: 24px;
    flex: none;
    background: radial-gradient(circle, #909090 2px, transparent 2px) 0 0 / 4px 12px;
}
.toolgroup .handle {
    margin-right: -4px;
}
.sep {
    width: 2px;
    height: 38px;
    margin: 0 3px;
    flex: none;
    background: repeating-linear-gradient(#707070 0 2px, transparent 2px 6px);
}
.toolbar.props {
    height: 126px;
}
.numeric {
    display: flex;
    align-items: center;
    width: 1292px;
    padding: 0 14px;
}
.props .handle {
    height: 96px;
    margin-right: 8px;
}
input[type=text] {
    width: 100%;
    min-width: 0;
    height: 30px;
    padding: 0 3px;
    background: #fff;
    border: 2px solid #ababab;
    border-right-width: 1px;
    border-left-width: 1px;
}
input[type=text]:disabled {
    border-color: #c8c8c8;
    color: #7f7f7f;
}
.stepper {
    display: flex;
    flex-direction: column;
    width: 22px;
    height: 36px;
    flex: none;
    border-radius: 8px;
    background: #fff;
    box-shadow: 0 0 0 1px #cfcfcf;
    color: #333;
}
.stepper.off {
    background: #f1f1f1;
    color: #7f7f7f;
}
.stepper button {
    flex: 1;
    display: flex;
    align-items: center;
    justify-content: center;
}
.stepper button::before {
    content: "";
    width: 8px;
    height: 8px;
    border: solid currentColor;
    border-width: 2px 0 0 2px;
    margin-top: 4px;
    transform: rotate(45deg);
}
.stepper button:last-child::before {
    margin: -4px 0 0;
    transform: rotate(225deg);
}
.position {
    display: grid;
    grid-template-columns: 52px 142px 22px 36px 44px 70px 144px 22px 57px 130px 22px 20px;
    gap: 18px 6px;
    align-items: center;
}
.position label {
    text-align: right;
}
.lock {
    grid-row: 1 / 3;
    grid-column: 5;
    justify-self: end;
    width: 40px;
    height: 46px;
    display: grid;
    place-items: center;
    border-radius: 6px;
    background: #c6c6c6;
}
.anchor {
    display: grid;
    grid-template-columns: repeat(3, 32px);
    gap: 0 2px;
    width: 106px;
    height: 110px;
    margin-left: 34px;
    place-content: center;
    border-radius: 8px;
    border: 1px solid #ccc;
    background: #0000000f;
}
input[type=radio] {
    appearance: none;
    width: 32px;
    height: 32px;
    border-radius: 50%;
    border: 1px solid #a8a8a8;
    background: #fff;
}
.anchor input:checked {
    border: 10px solid #3d9bff;
}
.rotate {
    display: flex;
    align-items: center;
    gap: 7px;
    margin: 0 26px;
}
.rotate input {
    width: 78px;
}
.btn {
    display: flex;
    align-items: center;
    justify-content: center;
    gap: 12px;
    height: 38px;
    border-radius: 7px;
    background: #fff;
    box-shadow: 0 0 0 1px #cdcdcd, 0 2px 1px #a8a8a8;
}
.btn svg {
    width: 34px;
    height: 34px;
}
.units {
    width: 58px;
    height: 39px;
    margin-bottom: 4px;
}
.textprops {
    display: flex;
    align-items: center;
    padding: 0 0 3px 14px;
    color: #7f7f7f;
}
.fontbox {
    width: 731px;
    display: grid;
    gap: 16px;
}
.line {
    display: flex;
    align-items: center;
    gap: 6px;
    height: 40px;
}
.combo {
    flex: 1;
    display: flex;
    height: 40px;
    margin: 0 4px 0 2px;
    background: #fff;
    border: 1px solid #c0c0c0;
    border-radius: 0 8px 8px 0;
}
.combo input[type=text] {
    height: 38px;
    border: 0;
    padding-left: 4px;
    background: none;
}
.combo button {
    width: 34px;
    flex: none;
    display: grid;
    place-items: center;
    background: #f3f3f3;
    border-left: 1px solid #ddd;
    border-radius: 0 8px 8px 0;
}
.combo button::before {
    content: "";
    width: 10px;
    height: 10px;
    margin-top: -6px;
    border: solid currentColor;
    border-width: 0 2px 2px 0;
    transform: rotate(45deg);
}
.line .w112 {
    width: 112px;
    flex: none;
}
.styles {
    padding-left: 49px;
    justify-content: space-between;
}
.styles label, .check {
    display: flex;
    align-items: center;
    gap: 5px;
}
.toggle {
    appearance: none;
    width: 32px;
    height: 20px;
    flex: none;
    border: 2px solid #6a2e2e;
    border-radius: 6px;
    background: linear-gradient(to right, #6a2e2e 17px, transparent 17px);
}
.toggle:checked {
    border-color: #2fc52f;
    background: radial-gradient(circle at 20px 8px, #000 3px, transparent 4px), linear-gradient(to right, transparent 13px, #2fcb2f 13px);
}
.toggle:disabled {
    border-color: #7f7f7f;
    background: linear-gradient(to right, #7f7f7f 17px, transparent 17px);
}
.toggle:checked:disabled {
    background: radial-gradient(circle at 20px 8px, #000 3px, transparent 4px), linear-gradient(to right, transparent 13px, #7f7f7f 13px);
}
.spacing {
    display: grid;
    grid-template-columns: 104px 104px 22px 76px 126px;
    gap: 16px 6px;
    align-items: center;
}
.spacing label {
    text-align: right;
    padding-right: 2px;
}
.select {
    position: relative;
    display: block;
}
.select select {
    appearance: none;
    display: block;
    width: 100%;
    height: 39px;
    padding: 0 32px 0 18px;
    border-radius: 7px;
    background: linear-gradient(#6cb3fa, #067aff) right / 33px 100% no-repeat, #fff;
    box-shadow: 0 0 0 1px #cdcdcd, 0 2px 1px #a8a8a8;
    color: #000;
    opacity: 1;
}
.select svg {
    position: absolute;
    right: 7px;
    top: 6px;
    width: 20px;
    height: 28px;
    color: #fff;
    pointer-events: none;
}
.select.off select {
    padding-left: 16px;
    background: #f1f1f1;
    color: #7f7f7f;
}
.select.off svg {
    color: #8a8a8a;
}
.warp {
    width: 216px;
    margin-left: 18px;
    display: grid;
    gap: 16px;
}
.warp .select {
    width: 210px;
}
.offset {
    display: flex;
    align-items: center;
    gap: 6px;
    height: 40px;
}

/* left tool palette */
main {
    flex: 1;
    min-height: 0;
    display: flex;
    background: #ebebeb;
}
.palette {
    width: 130px;
    flex: none;
    display: flex;
    flex-direction: column;
    align-items: center;
    padding: 16px 2px 0 0;
    border-right: 2px solid #b0b0b0;
    border-left: 1px solid #fff;
    background: linear-gradient(to right, #f2f2f2, #c8c8c8);
    color: #7f7f7f;
}
.palette > button {
    width: 40px;
    height: 36px;
    margin: 4px 0;
    display: grid;
    place-items: center;
    flex: none;
    color: #000;
}
.palette > button:disabled {
    color: #757575;
}
.palette .active {
    border-radius: 8px 8px 0 0;
    background: #bfbfbf;
}
.palette .letter {
    font-size: 33px;
    font-weight: 900;
}
.handle.wide {
    width: 108px;
    height: 4px;
    background: radial-gradient(circle, #909090 2px, transparent 2px) 0 0 / 12px 4px;
}
.handle.second {
    margin-top: 14px;
}
.rule {
    width: 121px;
    height: 2px;
    margin: 8px 0 10px 6px;
    flex: none;
    background: repeating-linear-gradient(to right, #707070 0 2px, transparent 2px 6px);
}
.palette label {
    margin: 3px 0 8px;
}
.radius {
    display: flex;
    align-items: center;
    gap: 6px;
    padding: 0 2px 0 4px;
}
.radius input {
    text-align: center;
}

/* workspace */
.canvas {
    flex: 1;
    min-width: 0;
    margin: 6px 5px 5px 6px;
    background: #f8f8f8;
}
.canvas svg {
    width: 100%;
    height: 100%;
    overflow: hidden;
}
.grid {
    stroke: #e0e0e0;
    stroke-width: 2px;
}
.axis {
    fill: #8a8a8a;
    stroke: none;
    font-size: 20px;
}
.axis.mid { text-anchor: middle; }
.axis.end { text-anchor: end; }
.band {
    fill: #00000033;
    stroke: none;
}
.cutline {
    stroke: #f02020;
    stroke-width: 2px;
    stroke-dasharray: 14 4 3 4 3 4;
}
.grip {
    fill: #969696;
    stroke: none;
}
.turns {
    fill: #808080;
    stroke: none;
}
.arc {
    fill: none;
    stroke: #808080;
    stroke-width: 4px;
}
.cursor {
    fill: #000;
    stroke: #fff;
    stroke-width: 2px;
}

/* right dock */
.dock {
    width: 985px;
    flex: none;
    border-left: 2px solid #8c8c8c;
    background: #ebebeb;
    display: flex;
    flex-direction: column;
}
.panel h2 {
    display: flex;
    align-items: center;
    gap: 8px;
    height: 44px;
    padding: 0 5px 1px;
    border-radius: 7px;
    color: #fff;
    background: linear-gradient(to right, #000 2%, #7a2020 38%, #c03232 60%, #dd7b33);
}
.panel h2 button {
    width: 28px;
    height: 28px;
    border-radius: 50%;
    background: #555;
}
.panel h2 svg {
    width: 28px;
    height: 28px;
}
.cuts {
    border-bottom: 2px solid #a0a0a0;
    padding-bottom: 1px;
}
.layers {
    display: flex;
    padding: 0 16px 0 4px;
    gap: 17px;
}
.list {
    flex: 1;
    height: 426px;
    border: 1px solid #b4b4b4;
    background: #fff;
}
table {
    width: 100%;
    table-layout: fixed;
    border-collapse: collapse;
}
.c-id { width: 62px; }
.c-layer { width: 80px; }
.c-mode { width: 176px; }
.c-spd { width: 134px; }
.c-out { width: 89px; }
.c-show { width: 73px; }
th {
    height: 35px;
    padding: 0 0 2px 9px;
    text-align: left;
    font-weight: 400;
    color: #222;
    background: linear-gradient(#c0c0c0, #c0c0c0) right center / 2px 26px no-repeat, #ebebeb;
}
th:first-child {
    padding-left: 14px;
}
td {
    height: 48px;
    padding: 0 0 0 10px;
}
.tall td {
    height: 64px;
}
td.c {
    padding: 0 6px 0 0;
    text-align: center;
}
td .toggle {
    display: block;
    margin: auto;
}
.inset {
    padding-left: 7px;
}
.inset .toggle {
    margin: 0;
}
.chip {
    display: block;
    width: 60px;
    height: 40px;
    line-height: 38px;
    text-align: center;
    font-size: 22px;
}
.chip.black { background: #000; color: #fff; }
.chip.orange { background: #f36926; }
.chip.red { background: #e8414e; color: #fff; }
td .select {
    width: 152px;
    margin-bottom: 4px;
}
tr.selected {
    background: #0069d9;
    color: #fff;
}
.order {
    width: 96px;
    padding-top: 26px;
    display: grid;
    align-content: start;
    gap: 26px;
}
.order .apart {
    margin-top: 36px;
}
.settings {
    display: grid;
    grid-template-columns: 1fr 108px 22px 159px 80px 22px;
    gap: 2px 6px;
    align-items: center;
    margin: 10px 8px 0;
    padding: 7px 9px 3px;
    border: 1px solid #dadada;
    border-radius: 8px;
    background: #e1e1e1;
}
.settings label {
    text-align: right;
    padding-right: 10px;
    white-space: nowrap;
}
.settings input {
    text-align: right;
    padding-right: 7px;
}
.dim {
    color: #7f7f7f;
}
.color {
    grid-column: 2 / 4;
    height: 36px;
    border: 2px solid #000;
    background: #f00;
}
.last {
    grid-column: 4;
}
.tabrow {
    display: flex;
    gap: 6px;
    margin: 11px 6px 0;
}
.strip {
    flex: 1;
    height: 14px;
    background: #e1e1e1;
    border-radius: 0 0 0 8px;
}
.strip:last-child {
    border-radius: 0 0 8px 0;
}
.tabs {
    display: flex;
    height: 39px;
    border-radius: 7px;
    background: #fff;
    box-shadow: 0 0 0 1px #cdcdcd, 0 2px 1px #a8a8a8;
}
.tabs button {
    padding: 0 23px 0 25px;
    border-left: 2px solid #e0e0e0;
}
.tabs .on {
    padding: 0 25px 0 20px;
    border: 0;
    border-radius: 7px 0 0 7px;
    color: #fff;
    background: linear-gradient(#6cb3fa, #067aff);
}
.laser h2 {
    margin-top: 1px;
}
.state {
    height: 43px;
    padding: 11px 3px;
}
.body {
    padding: 0 16px;
}
.actions {
    display: grid;
    grid-template-columns: repeat(4, 1fr);
    gap: 28px 10px;
}
.homing {
    display: grid;
    grid-template-columns: 226px 226px 1fr 217px;
    gap: 16px;
    align-items: center;
    padding-right: 6px;
    margin-top: 34px;
}
.homing label {
    text-align: right;
}
.homing select {
    color: #003c00;
}
.options {
    display: flex;
    justify-content: space-between;
    margin-top: 10px;
}
.checks {
    margin-left: -6px;
    padding-top: 14px;
    display: grid;
    align-content: start;
    gap: 20px;
}
.rotary {
    color: #7f7f7f;
    margin: 0 0 14px 4px;
}
.origin {
    width: 466px;
}
.origin .btn {
    width: 100%;
    margin-top: 10px;
}
.job {
    display: flex;
    align-items: center;
    justify-content: flex-end;
    gap: 22px;
    padding-right: 9px;
    margin-bottom: 17px;
}
.jobgrid {
    width: 210px;
    height: 96px;
    padding: 4px 2px;
    display: grid;
    grid-template-columns: 68px 70px 68px;
    grid-auto-rows: 28px;
    border: 1px solid #dadada;
    border-radius: 7px;
    background: #e1e1e1;
}
.jobgrid input {
    background: #f0f0f0;
    border-color: #c4c4c4;
}
.jobgrid input:checked {
    background: radial-gradient(circle, #8a8a8a 5px, #f0f0f0 6px);
}
.devices {
    display: grid;
    grid-template-columns: 134px 386px 1fr;
    gap: 20px;
    margin-top: 34px;
}
.port + .select {
    margin-left: 6px;
}
.laser .tabrow {
    margin-top: 29px;
}

/* colour swatches */
.swatches {
    display: flex;
    align-items: center;
    gap: 12px;
    height: 51px;
    padding: 0 14px;
    flex: none;
    border-top: 1px solid #fff;
    border-bottom: 2px solid #a0a0a0;
    background: linear-gradient(#efefef, #c8c8c8);
}
.swatches .handle {
    margin-right: -4px;
}
.swatches button {
    width: 36px;
    height: 36px;
    flex: none;
    font-size: 18px;
}
.swatches .lt {
    color: #fff;
}
.swatches .picked {
    box-shadow: 0 0 0 3px #b8b8b8;
}

/* status bar */
footer {
    display: flex;
    align-items: center;
    gap: 22px;
    height: 54px;
    padding: 0 21px 0 4px;
    flex: none;
    border-top: 1px solid #707070;
    border-radius: 0 0 10px 10px;
    background: linear-gradient(#e9e9e9, #b2b2b2);
    font-size: 21px;
    white-space: nowrap;
}
.progress {
    width: calc(100% - 952px);
    height: 44px;
    margin-left: auto;
    background: #ebebeb;
}
```
